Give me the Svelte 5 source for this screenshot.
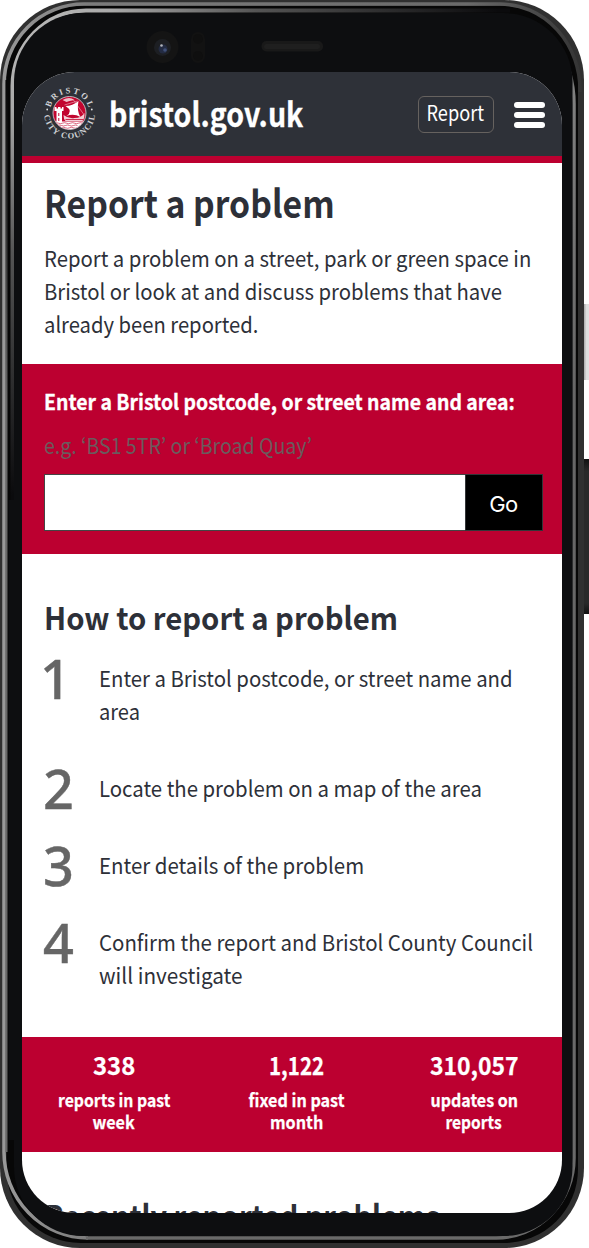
<script>
  const steps = [
    [['Enter a Bristol postcode, or street name and', 414], ['area', 41]],
    [['Locate the problem on a map of the area', 383]],
    [['Enter details of the problem', 265]],
    [['Confirm the report and Bristol County Council', 434], ['will investigate', 144]]
  ];
  const stats = [
    [['338', 42], ['reports in past', 112], ['week', 42]],
    [['1,122', 55], ['fixed in past', 96], ['month', 53]],
    [['310,057', 89], ['updates on', 87], ['reports', 56]]
  ];

  // Condenses a line of text horizontally to the given width.
  function fit(node, width) {
    const apply = () => {
      node.style.transform = 'none';
      node.style.transform = `scaleX(${width / node.offsetWidth})`;
    };
    apply();
    document.fonts.ready.then(apply);
  }
</script>

<div class="stage">
  <div class="key light"></div>
  <div class="key dark"></div>
  <div class="phone">
    <svg class="chassis" width="584" height="1248" viewBox="0 0 584 1248" aria-hidden="true">
      <defs>
        <linearGradient id="rim" gradientUnits="userSpaceOnUse" x1="0" y1="0" x2="584" y2="0">
          <stop offset="0" stop-color="#9a9a9a" />
          <stop offset=".15" stop-color="#7c7c7c" />
          <stop offset=".8" stop-color="#6a6a6a" />
          <stop offset="1" stop-color="#333" />
        </linearGradient>
        <radialGradient id="gleam" gradientUnits="userSpaceOnUse" cx="13" cy="10" r="485">
          <stop offset="0" stop-color="#bbb" />
          <stop offset=".2" stop-color="#aaa" />
          <stop offset=".5" stop-color="#555" />
          <stop offset="1" stop-color="#0b0b0d" />
        </radialGradient>
        <linearGradient id="inner" gradientUnits="userSpaceOnUse" x1="0" y1="80" x2="0" y2="400">
          <stop offset="0" stop-color="#070707" />
          <stop offset="1" stop-color="#686868" />
        </linearGradient>
        <linearGradient id="side" gradientUnits="userSpaceOnUse" x1="0" y1="40" x2="0" y2="1240">
          <stop offset="0" stop-color="#0d0e10" />
          <stop offset=".04" stop-color="#808080" />
          <stop offset=".3" stop-color="#666" />
          <stop offset="1" stop-color="#6a6a6a" />
        </linearGradient>
      </defs>
      <rect width="584" height="1248" rx="80" fill="#303030" />
      <rect x="6.500" y="6" width="571.500" height="1237" rx="74" fill="#070707" />
      <path d="M580 92A80 86 0 0 0 500 4H84A80 80 0 0 0 4 84V1152A84 86 0 0 0 88 1238" fill="none" stroke="url(#rim)" stroke-width="3.500" />
      <rect x="5.500" y="80" width="2" height="1072" fill="url(#inner)" />
      <path d="M510 10.500H86A74 76 0 0 0 12.500 86V540" fill="none" stroke="url(#gleam)" stroke-width="4" />
      <path d="M556 45Q574 70 574 104V1158A78 80 0 0 1 496 1238H86" fill="none" stroke="url(#side)" stroke-width="3.500" />
      <rect x="14" y="13" width="558.500" height="1223" rx="69" fill="#0d0e10" />
      <rect x="8.500" y="500" width="12" height="640" fill="#0d0e10" />
      <circle cx="162.500" cy="47" r="16" fill="#141414" />
      <circle cx="162.500" cy="47.500" r="8.500" fill="#1d1f23" />
      <circle cx="163" cy="49" r="4.500" fill="#232b42" />
      <circle cx="161.500" cy="45.500" r="1.300" fill="#b2b5bd" />
      <circle cx="165" cy="50" r="1.800" fill="#405079" />
      <rect x="191" y="32" width="14" height="31" rx="7" fill="#121212" />
      <circle cx="198" cy="39" r="5" fill="#0f0f0f" />
      <circle cx="198" cy="56" r="5" fill="#0f0f0f" />
      <rect x="261.500" y="41" width="61.500" height="10.500" rx="5" fill="#191919" />
      <rect x="264" y="44" width="56" height="5" rx="2.500" fill="#1f1f1f" />
    </svg>

    <div class="screen">
      <header>
        <svg class="crest" width="54" height="58" viewBox="-27.500 -28 54 58" aria-hidden="true">
          <defs>
            <path id="arcTop" d="M-19.800 0A19.800 19.800 0 0 1 19.800 0" />
            <path id="arcLow" d="M-25.300 -3A25.500 25.500 0 1 0 25.300 -3" />
            <clipPath id="disc"><circle r="16.200" /></clipPath>
          </defs>
          <text class="ring"><textPath href="#arcTop" startOffset="50%" text-anchor="middle" textLength="51">BRISTOL</textPath></text>
          <text class="ring"><textPath href="#arcLow" startOffset="50%" text-anchor="middle" textLength="76">CITY COUNCIL</textPath></text>
          <circle cx="-22.300" cy="-3.500" r="0.900" fill="#ddd" />
          <circle cx="22.300" cy="-3.500" r="0.900" fill="#ddd" />
          <circle r="16.300" fill="#c2062f" />
          <g clip-path="url(#disc)" fill="#fff">
            <path d="M-15 -6h2v1.500h1.500V-6h2.500v1.500h1.500V-6H-6v4h-1.500V9H-13V-2h-2Z" />
            <path d="M-11.200 0h1v3h-1zM-11.200 5h1v3h-1z" fill="#c2062f" />
            <path d="M-4 -7Q3 -7 9 -12Q7 -2 11 4Q4 0 -3 3Q4 -2 -4 -7Z" />
            <path d="M-7 -13Q0 -17 5 -13L0 -12L-3 -11Z" opacity=".75" />
            <path d="M-6 2Q-1 6 5 5Q12 5 15 0Q15 6 13 8H-4Q-6 6 -6 2Z" opacity=".8" />
            <path d="M-4 6.500H14" stroke="#c2062f" stroke-width=".8" />
            <path d="M4 -13L14 1M8 -12L-5 -8" stroke="#fff" stroke-width=".6" opacity=".7" />
            <path d="M-16 8.500H16V17H-16Z" />
            <path d="M-15 10.200q2 -1 4 0t4 0t4 0t4 0t4 0t4 0t4 0M-12 12.500q2 -1 4 0t4 0t4 0t4 0t4 0M-8 14.800q2 -1 4 0t4 0t4 0t4 0" fill="none" stroke="#c2062f" stroke-width=".6" />
          </g>
          <circle r="16.500" fill="none" stroke="#ead8de" stroke-width=".8" />
        </svg>
        <div class="brand"><span class="fit" use:fit={194}>bristol.gov.uk</span></div>
        <a class="report" href="#report"><span class="fit mid" use:fit={58}>Report</span></a>
        <button class="menu" aria-label="Menu"><i></i><i></i><i></i></button>
      </header>

      <section class="intro">
        <h1><span class="fit" use:fit={291}>Report a problem</span></h1>
        <p>
          <span class="fit" use:fit={487}>Report a problem on a street, park or green space in</span><br />
          <span class="fit" use:fit={458}>Bristol or look at and discuss problems that have</span><br />
          <span class="fit" use:fit={214}>already been reported.</span>
        </p>
      </section>

      <form class="search" onsubmit={(e) => e.preventDefault()}>
        <label for="pc"><span class="fit" use:fit={471}>Enter a Bristol postcode, or street name and area:</span></label>
        <div class="hint"><span class="fit" use:fit={268}>e.g. ‘BS1 5TR’ or ‘Broad Quay’</span></div>
        <div class="field">
          <input id="pc" type="text" />
          <button>Go</button>
        </div>
      </form>

      <section class="how">
        <h2><span class="fit" use:fit={354}>How to report a problem</span></h2>
        <ol>
          {#each steps as lines, i}
            <li class="s{i + 1}">
              <b>{i + 1}</b>
              <div>{#each lines as [line, w]}<p class="line"><span class="fit" use:fit={w}>{line}</span></p>{/each}</div>
            </li>
          {/each}
        </ol>
      </section>

      <section class="stats">
        {#each stats as lines}
          <div>{#each lines as [line, w]}<p class="stat"><span class="fit mid" use:fit={w}>{line}</span></p>{/each}</div>
        {/each}
      </section>

      <h2 class="recent"><span class="fit" use:fit={396}>Recently reported problems</span></h2>
    </div>
  </div>
</div>

<style>
  :global(body) { background: #fff; overflow: hidden; }
  .stage { position: relative; width: 589px; height: 1248px; overflow: hidden; font-family: "Noto Sans CJK KR", "Noto Sans", sans-serif; color: #2d3038; }
  .fit { display: inline-block; transform-origin: 0 50%; white-space: nowrap; }
  .fit.mid { transform-origin: 50% 50%; }
  .key { position: absolute; left: 583px; width: 10px; }
  .light { top: 304px; height: 76px; background: linear-gradient(90deg, #aaa 10%, #ddd 35%, #e4e4e4); }
  .dark { top: 459px; height: 155px; background: linear-gradient(#111, #292929 8%, #292929 93%, #111); }
  .phone { position: relative; width: 584px; height: 1248px; box-sizing: border-box; padding: 72px 22px 35px; }
  .chassis { position: absolute; inset: 0; }
  .screen { position: relative; width: 540px; height: 1141px; border-radius: 53px; overflow: hidden; background: #fff; }
  header { height: 91px; box-sizing: border-box; background: #2e3138; border-bottom: 7px solid #bc0030; display: flex; align-items: center; padding: 1px 17px 0 20px; }
  .crest { flex: none; overflow: visible; margin-top: -1px; }
  .ring { font: 700 8.500px "Liberation Serif", serif; fill: #d0d1d5; }
  .brand { margin: -3px 0 0 13px; color: #fff; font-weight: 700; font-size: 33px; line-height: 40px; width: 309px; flex: none; -webkit-text-stroke: .3px #fff; }
  .report { box-sizing: border-box; width: 76px; height: 37px; border: 1px solid #66625f; border-radius: 6px; color: #fff; text-decoration: none; font-size: 21px; line-height: 31px; display: flex; justify-content: center; flex: none; padding-right: 2px; }
  .menu { margin-left: 20px; width: 31px; padding: 0; border: 0; background: none; display: grid; gap: 4px; }
  .menu i { display: block; height: 6px; border-radius: 3px; background: #fff; }
  h1, h2, p, ol { margin: 0; padding: 0; }
  .intro { height: 201px; box-sizing: border-box; padding: 15px 22px 0; white-space: nowrap; }
  h1 { font-size: 38px; line-height: 48px; font-weight: 700; }
  .intro p { margin-top: 15px; font-size: 22px; line-height: 33px; }
  .search { height: 190px; box-sizing: border-box; background: #bc0030; padding: 21px 19px 0 22px; white-space: nowrap; }
  label { display: block; color: #fff; font-weight: 700; font-size: 21px; line-height: 33px; -webkit-text-stroke: .3px #fff; }
  .hint { margin-top: 10px; font-size: 22px; line-height: 33px; color: #6b5b5d; }
  .field { display: flex; height: 57px; margin-top: 13px; }
  .field input { flex: 1; min-width: 0; border: 1.500px solid #444; border-right: 0; background: #fff; padding: 0 10px; border-radius: 0; }
  .field button { width: 78px; border: 1.500px solid #333538; background: #000; color: #fff; font: 22px/1 Inter, sans-serif; letter-spacing: -.5px; padding: 3px 1px 0 0; }
  .how { height: 482.500px; box-sizing: border-box; padding: 43px 22px 0; white-space: nowrap; }
  h2 { font-size: 31px; line-height: 40px; font-weight: 700; }
  ol { list-style: none; margin-top: 16px; }
  li { display: flex; height: 77px; }
  li.s1 { height: 110px; }
  li b { width: 55px; flex: none; font: 500 54px/50px "Noto Sans", sans-serif; color: #666; text-indent: -1px; -webkit-text-stroke: .4px #666; }
  li.s1 b { text-indent: -4px; }
  li div { font-size: 22px; line-height: 33px; padding-top: 8px; }
  .stats { height: 115.500px; box-sizing: border-box; background: #bc0030; color: #fff; display: grid; grid-template-columns: 184px 181px 174px; padding-top: 11.500px; font-weight: 700; }
  .stat { display: flex; justify-content: center; font-size: 18px; line-height: 22px; -webkit-text-stroke: .25px #fff; }
  .stat:first-child { font-size: 25px; line-height: 32px; margin-bottom: 8px; }
  .recent { margin: 43px 22px 0; white-space: nowrap; }
</style>
